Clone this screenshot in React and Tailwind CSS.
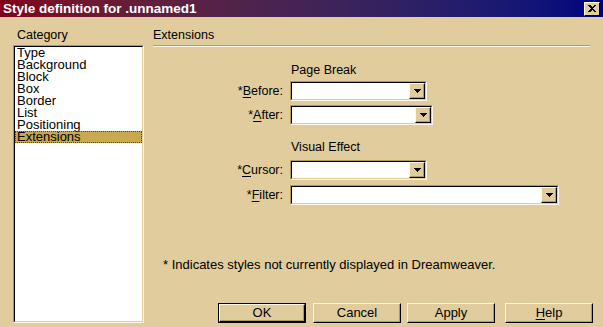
import React from 'react'

const FACE = 'bg-[#E0CC9C]'

// sunken combo box with the little drop button
const Combo = ({ width }) => (
    <div className={`${width} h-[20px] border border-t-[#B09858] border-l-[#B09858] border-b-[#FFF8E8] border-r-[#FFF8E8]`}>
        <div className="flex h-full border border-t-black border-l-black border-b-[#E0CC9C] border-r-[#E0CC9C] bg-white">
            <div className="flex-1" />
            <div className={`w-[16px] h-full ${FACE} border border-t-[#FFF8E8] border-l-[#FFF8E8] border-b-black border-r-black shadow-[inset_-1px_-1px_0_#B09858] flex items-center justify-center`}>
                <svg width="7" height="4" viewBox="0 0 7 4" shapeRendering="crispEdges">
                    <polygon points="0,0 7,0 4,4 3,4" fill="black" />
                </svg>
            </div>
        </div>
    </div>
)

const Row = ({ ul, rest, width, className }) => (
    <div className={`flex items-center ${className}`}>
        <div className="w-[131px] pr-[1px] text-right">
            *<span className="underline underline-offset-2">{ul}</span>{rest}:
        </div>
        <div className="ml-[6px]">
            <Combo width={width} />
        </div>
    </div>
)

const Btn = ({ children, isDefault, className }) => (
    <div className={`${className} w-[88px] h-[20px] ${isDefault ? 'border border-black' : ''}`}>
        <div className={`h-full ${FACE} border border-t-[#FFF8E8] border-l-[#FFF8E8] border-b-black border-r-black shadow-[inset_-1px_-1px_0_#B09858] flex items-center justify-center`}>
            {children}
        </div>
    </div>
)

const categories = ['Type', 'Background', 'Block', 'Box', 'Border', 'List', 'Positioning', 'Extensions']

export default function App() {
    return (
        <div className={`w-[603px] h-[327px] overflow-hidden ${FACE} font-['Liberation_Sans',sans-serif] text-[12.5px] text-black flex flex-col`}>
            {/* Title bar */}
            <div className="h-[17px] shrink-0 flex items-center justify-between pl-[3px] pr-[3px] bg-linear-to-r from-[#80001c] to-[#000080]">
                <span className="text-white font-bold text-[13.5px] leading-none">Style definition for .unnamed1</span>
                <div className={`w-[16px] h-[14px] ${FACE} border border-t-[#FFF8E8] border-l-[#FFF8E8] border-b-black border-r-black flex items-center justify-center`}>
                    <svg width="8" height="7" viewBox="0 0 8 7" shapeRendering="crispEdges">
                        <path d="M0 0h2l2 2 2-2h2L5 3.5 8 7H6L4 5 2 7H0l3-3.5z" fill="black" />
                    </svg>
                </div>
            </div>

            <div className="flex flex-1">
                {/* Category list */}
                <div className="ml-[13px] w-[131px] flex flex-col">
                    <div className="mt-[10px] pl-[4px] leading-[16px]">Category</div>
                    <div className="mt-[2px] h-[278px] border border-t-[#B09858] border-l-[#B09858] border-b-[#FFF8E8] border-r-[#FFF8E8]">
                        <div className="h-full bg-white border border-t-black border-l-black border-b-[#E0CC9C] border-r-[#E0CC9C] text-[13px]">
                            {categories.map((c) => (
                                <div
                                    key={c}
                                    className={`h-[12px] leading-[12px] pl-[2px] ${c === 'Extensions' ? 'bg-[#C8A850] outline-1 outline-dotted outline-offset-[-1px] outline-[#304080]' : ''}`}
                                >
                                    {c}
                                </div>
                            ))}
                        </div>
                    </div>
                </div>

                {/* Extensions panel */}
                <div className="ml-[9px] w-[440px] flex flex-col">
                    <div className="mt-[10px] leading-[16px]">Extensions</div>
                    <div className="mt-[2px] mr-[3px] border-t border-b border-t-[#B89A58] border-b-[#FFF8E8]" />

                    <div className="mt-[15px] pl-[138px] leading-[16px]">Page Break</div>
                    <Row className="mt-[3px]" ul="B" rest="efore" width="w-[137px]" />
                    <Row className="mt-[4px]" ul="A" rest="fter" width="w-[143px]" />

                    <div className="mt-[14px] pl-[138px] leading-[16px]">Visual Effect</div>
                    <Row className="mt-[5px]" ul="C" rest="ursor" width="w-[137px]" />
                    <Row className="mt-[5px]" ul="F" rest="ilter" width="w-[269px]" />

                    <div className="mt-[52px] pl-[10px] leading-[16px] text-[13px]">* Indicates styles not currently displayed in Dreamweaver.</div>

                    <div className="mt-[30px] flex text-[13px]">
                        <Btn isDefault className="ml-[65px]">OK</Btn>
                        <Btn className="ml-[7px]">Cancel</Btn>
                        <Btn className="ml-[6px]">Apply</Btn>
                        <Btn className="ml-[10px]"><span className="underline underline-offset-2">H</span>elp</Btn>
                    </div>
                </div>
            </div>
        </div>
    )
}
